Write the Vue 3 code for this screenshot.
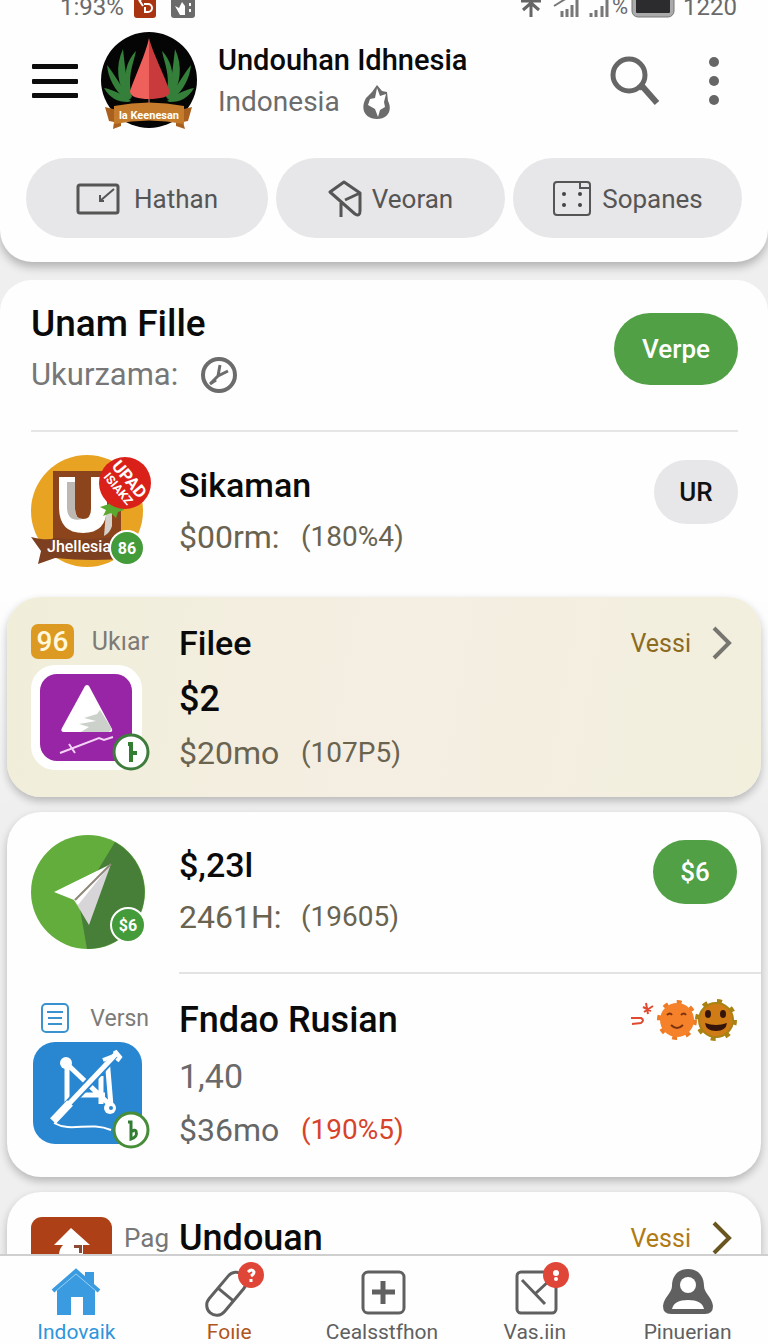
<template>
  <div class="screen">
    <header class="top">
      <div class="status">
        <span>1:93%</span>
        <svg class="status-app" width="22" height="24" viewBox="0 0 22 24">
          <rect width="22" height="24" rx="3" fill="#a83412" />
          <path d="M5 6l4 6M9 4l-4 3M10 10h4a4 4 0 0 1 0 8h-3v-5" fill="none" stroke="#fff" stroke-width="2" />
        </svg>
        <svg class="status-file" width="24" height="24" viewBox="0 0 24 24">
          <rect width="24" height="24" rx="3" fill="#6b6b6b" />
          <path d="M4 12l4 2 3-6 3 4v9H9z" fill="#fff" />
          <path d="M19 3v18" stroke="#fff" stroke-width="2" stroke-dasharray="3 3" />
        </svg>
        <span class="status-space"></span>
        <svg width="24" height="24" viewBox="0 0 24 24" fill="none" stroke="#666" stroke-width="3">
          <path d="M12 3v20M2 7h20M12 9l-8 7M12 9l8 7" />
        </svg>
        <svg class="signal" width="26" height="24" viewBox="0 0 26 24" fill="none" stroke="#777">
          <path d="M1 12L14 4" stroke-width="2" />
          <path d="M9 23v-6M14 23v-8M19 23V11M24 23V4" stroke-width="3" />
        </svg>
        <svg class="signal" width="20" height="24" viewBox="0 0 20 24" fill="none" stroke="#777" stroke-width="3">
          <path d="M2 23v-4M7 23v-7M13 23V12M18 23V4" />
        </svg>
        <span class="status-percent">%</span>
        <svg width="44" height="24" viewBox="0 0 44 24">
          <rect x="1" y="-10" width="42" height="33" rx="6" fill="#aaa" stroke="#777" />
          <rect x="5" y="-8" width="34" height="27" rx="1" fill="#2c2c2e" />
        </svg>
        <span class="status-time">1220</span>
      </div>

      <div class="appbar">
        <button class="icon-button" aria-label="Menu">
          <svg width="48" height="36" viewBox="0 0 48 36" fill="#0c0c0c">
            <rect x="1" y="1" width="46" height="5" rx="1" />
            <rect x="1" y="16" width="46" height="5" rx="1" />
            <rect x="1" y="30" width="46" height="5" rx="1" />
          </svg>
        </button>
        <svg class="logo" width="96" height="100" viewBox="0 0 96 100">
          <circle cx="48" cy="49" r="48" fill="#050505" />
          <g fill="#347f3a">
            <path d="M27 69C16 54 14 35 22 18c2 17 3 31 8 48z" />
            <path d="M28 68C20 46 26 29 35 20c-3 15-9 25-4 46z" />
            <path d="M25 69C13 59 7 46 6 34c8 10 14 22 24 34z" />
            <path d="M27 71C16 71 9 67 3 57c10 2 18 6 27 13z" />
            <path d="M69 69c11-15 13-34 5-51-2 17-3 31-8 48z" />
            <path d="M68 68c8-22 2-39-7-48 3 15 9 25 4 46z" />
            <path d="M71 69c12-10 18-23 19-35-8 10-14 22-24 34z" />
            <path d="M69 71c11 0 18-4 24-14-10 2-18 6-27 13z" />
          </g>
          <path d="M48 7C45 22 35 43 29 60c0 6 8 8 19 8z" fill="#ee605c" />
          <path d="M48 7c4 16 15 36 21 54-1 5-10 7-21 7z" fill="#c93a3d" />
          <path d="M48 68v7" stroke="#704030" stroke-width="2" />
          <path d="M4 76l16 4v15l-8 3 1-7-5-1zM91 76l-16 4v15l9 3-2-7 5-1z" fill="#a9601e" />
          <path d="M13 75q35-7 70 0v18q-35-7-70 0z" fill="#c47b2b" />
          <text x="48" y="88" text-anchor="middle" font-size="11" font-weight="700" fill="#fff">la Keenesan</text>
        </svg>
        <div class="heading">
          <h1>Undouhan Idhnesia</h1>
          <p>
            Indonesia
            <svg width="30" height="36" viewBox="0 0 30 36">
              <path d="M4 14L10 8l5-7 5 6 5 1 1 9c5 10-1 18-11 18S-3 27 4 14z" fill="#6c6c6c" />
              <path d="M15 4l3 8 6-2-2 8 1 5-5 3-2 7-3-8-7-4 2-6 5-1z" fill="#fff" />
            </svg>
          </p>
        </div>
        <button class="icon-button search" aria-label="Search">
          <svg width="50" height="52" viewBox="0 0 50 52" fill="none" stroke="#666">
            <circle cx="19" cy="20" r="16" stroke-width="5" />
            <path d="M29 33l3-2 15 17" stroke-width="6" />
          </svg>
        </button>
        <button class="icon-button" aria-label="More">
          <svg width="48" height="50" viewBox="0 0 48 50" fill="#666">
            <circle cx="24" cy="6" r="5" />
            <circle cx="24" cy="25" r="5" />
            <circle cx="24" cy="44" r="5" />
          </svg>
        </button>
      </div>

      <div class="chips">
        <button class="chip chip-wide">
          <svg width="44" height="32" viewBox="0 0 44 32" fill="none" stroke="#555" stroke-width="3">
            <rect x="2" y="2" width="40" height="28" rx="2" />
            <path d="M38 6L24 18M24 12v6h4" stroke-width="2" />
          </svg>
          Hathan
        </button>
        <button class="chip chip-tight">
          <svg width="34" height="38" viewBox="0 0 34 38" fill="none" stroke="#555" stroke-width="3" stroke-linejoin="round">
            <path d="M2 12L16 2l16 11v18q0 6-5 3L2 12zM32 13L17 20M13 23v14" />
          </svg>
          Veoran
        </button>
        <button class="chip">
          <svg width="40" height="36" viewBox="0 0 40 36" fill="none" stroke="#555" stroke-width="2">
            <rect x="2" y="1" width="36" height="33" rx="3" />
            <path d="M28 1v6h10" />
            <g fill="#444" stroke="none">
              <circle cx="12" cy="13" r="2" />
              <circle cx="28" cy="13" r="2" />
              <circle cx="12" cy="24" r="2" />
              <circle cx="28" cy="24" r="2" />
            </g>
          </svg>
          Sopanes
        </button>
      </div>
    </header>

    <main class="feed">
      <section class="intro">
        <div class="intro-head">
          <div>
            <h2>Unam Fille</h2>
            <p>
              Ukurzama:
              <svg width="38" height="38" viewBox="0 0 38 38" fill="none" stroke="#6c6c6c">
                <circle cx="19" cy="19" r="16" stroke-width="4" />
                <path d="M20 9l-2 11M28 15L18 20l-8 8M10 28l6-4" stroke-width="3" />
              </svg>
            </p>
          </div>
          <button class="action">Verpe</button>
        </div>

        <article class="row row-short">
          <div class="lead">
            <svg width="120" height="112" viewBox="0 0 120 112">
              <circle cx="56" cy="56" r="56" fill="#e9a322" />
              <path d="M22 16h68v70H22z" fill="#8b441c" />
              <path d="M28 22h16v32q0 10 8 10t8-10V22h16v30q0 26-24 26-24 0-24-26z" fill="#fff" />
              <path d="M36 27h8v27q0 10 8 10-16 4-16-12z" fill="#bdb8b1" />
              <path d="M81 54v17q-2 7-8 10l2-24z" fill="#d5d1ca" />
              <path d="M76 43l2 6-9 3 6 3-3 6 8-3 5 5 2-6 6-2-4-8z" fill="#5aa82f" />
              <path d="M0 82q16 4 24 1 38 4 76-4v24q-38 4-76 0l-17 6 3-13z" fill="#7c3f20" />
              <circle cx="94" cy="28" r="26" fill="#da2119" />
              <g transform="rotate(50 94 28)" fill="#fff" font-weight="700" text-anchor="middle">
                <text x="94" y="28" font-size="17">UPAD</text>
                <text x="94" y="41" font-size="12">ISIAKZ</text>
              </g>
              <text x="48" y="97" text-anchor="middle" font-size="16" font-weight="500" fill="#fff">Jhellesia</text>
              <circle cx="96" cy="93" r="17" fill="#439b3a" stroke="#fff" stroke-width="2" />
              <text x="96" y="99" text-anchor="middle" font-size="16" font-weight="700" fill="#fff">86</text>
            </svg>
          </div>
          <div class="info">
            <h3>Sikaman</h3>
            <p class="price olive"><span>$00rm:</span><small>(180%4)</small></p>
          </div>
          <button class="pill pill-grey">UR</button>
        </article>
      </section>

      <div class="stage">
        <article class="card card-gold row">
          <div class="lead">
            <div class="meta">
              <span class="score">96</span>
              Ukıar
            </div>
            <svg width="120" height="108" viewBox="0 0 120 108">
              <rect width="111" height="105" rx="24" fill="#fff" />
              <rect x="9" y="9" width="92" height="87" rx="17" fill="#9825a5" />
              <path d="M54 21q2-2 4 0l23 43q1 3-2 3H33q-4 0-2-4z" fill="#fff" />
              <path d="M53 53l13-4 3-4 12 19-3 3H50l8-5-10-3 17-3z" fill="#ccd2cb" />
              <path d="M29 88l39-15 5 2 9-3M38 79l6 9" fill="none" stroke="#f3d3f5" stroke-width="2" />
              <circle cx="100" cy="87" r="17" fill="#fff" stroke="#3d7c3b" stroke-width="3" />
              <path d="M97 79h3v18M100 88h6" fill="none" stroke="#327d32" stroke-width="4" />
            </svg>
          </div>
          <div class="info">
            <h3>Filee</h3>
            <p class="amount strong">$2</p>
            <p class="price olive"><span>$20mo</span><small>(107P5)</small></p>
          </div>
          <a class="more" href="#">
            Vessi
            <svg width="22" height="34" viewBox="0 0 22 34" fill="none" stroke="#77756f" stroke-width="4">
              <path d="M3 2l15 15L3 32" />
            </svg>
          </a>
        </article>
      </div>

      <section class="card group">
        <article class="row row-short">
          <div class="lead">
            <svg width="120" height="114" viewBox="0 0 120 114">
              <circle cx="57" cy="57" r="57" fill="#62ad3b" />
              <path d="M84 7a57 57 0 0 1-28 107l-8-46 22-38z" fill="#477f39" />
              <path d="M80 29L23 57l20 8z" fill="#fff" />
              <path d="M80 29L43 65l15 25z" fill="#d7d5d7" />
              <path d="M80 29L43 65l4 5z" fill="#fff" />
              <path d="M80 29L44 65" stroke="#8f887a" stroke-width="2" />
              <circle cx="97" cy="90" r="17" fill="#439b3a" stroke="#fff" stroke-width="2" />
              <text x="97" y="96" text-anchor="middle" font-size="16" font-weight="700" fill="#fff">$6</text>
            </svg>
          </div>
          <div class="info">
            <h3>$,23l</h3>
            <p class="price olive"><span>2461H:</span><small>(19605)</small></p>
          </div>
          <button class="pill pill-green">$6</button>
        </article>

        <hr />

        <article class="row">
          <div class="lead">
            <div class="meta meta-small">
              <svg class="doc" width="28" height="30" viewBox="0 0 28 30" fill="none" stroke="#3a93cf" stroke-width="2">
                <rect x="1" y="1" width="26" height="28" rx="4" />
                <path d="M6 9h16M7 15h14M7 21h14" />
              </svg>
              Versn
            </div>
            <svg width="120" height="108" viewBox="0 0 120 108">
              <rect x="2" width="109" height="102" rx="22" fill="#2987d1" />
              <g fill="none" stroke="#fff">
                <path d="M36 22v42M36 22l43 41M76 16l4 48M44 53h30M70 34v28" stroke-width="5" />
                <path d="M84 13L32 68" stroke="#2987d1" stroke-width="9" />
                <path d="M85 12L33 67" stroke-width="5" />
                <path d="M39 61L22 79" stroke-width="8" />
                <path d="M72 18l13-5-1-4 5 6-3 4" stroke-width="4" />
                <path d="M23 81c18 10 35-2 57 7" stroke-width="2" />
              </g>
              <circle cx="35" cy="21" r="6" fill="#fff" />
              <circle cx="79" cy="66" r="6" fill="#fff" />
              <circle cx="80" cy="66" r="2" fill="#2987d1" />
              <circle cx="100" cy="88" r="17" fill="#fff" stroke="#468c39" stroke-width="3" />
              <path d="M97 80h3v17q7-2 5-8-2-2-4 1" fill="none" stroke="#327d32" stroke-width="3" />
            </svg>
          </div>
          <div class="info">
            <h3 class="wide">Fndao Rusian</h3>
            <p class="amount">1,40</p>
            <p class="price"><span>$36mo</span><small class="red">(190%5)</small></p>
          </div>
          <svg class="faces" width="108" height="52" viewBox="0 0 108 52">
            <path d="M2 24h10q4 2 0 5l-9 1M14 13l8 4M17 9l2 11M24 12l-9 6" fill="none" stroke="#e04a30" stroke-width="2" />
            <circle cx="48" cy="26" r="18" fill="none" stroke="#ed7a24" stroke-width="4" stroke-dasharray="5 9" />
            <circle cx="48" cy="26" r="17" fill="#f5822a" />
            <path d="M38 21q3-3 5 0M52 21q3-3 5 0M42 31q6 6 12 0" fill="none" stroke="#7b3210" stroke-width="2" />
            <circle cx="87" cy="26" r="19" fill="none" stroke="#a98213" stroke-width="4" stroke-dasharray="5 10" />
            <circle cx="87" cy="26" r="17" fill="#cf7c16" stroke="#a98213" stroke-width="2" />
            <path d="M76 29q11 4 22 0-1 8-11 8t-11-8z" fill="#35150b" />
            <ellipse cx="79" cy="20" rx="3" ry="4" fill="#35150b" />
            <ellipse cx="94" cy="20" rx="3" ry="4" fill="#35150b" />
          </svg>
        </article>
      </section>

      <section class="card">
        <article class="row">
          <div class="lead lead-inline">
            <svg width="81" height="80" viewBox="0 0 81 80">
              <rect width="81" height="80" rx="11" fill="#ae4018" />
              <path d="M40 11L23 28h9q-4 4-4 10h24V28h7z" fill="#fff" />
              <path d="M43 28h8v8h-3v-5h-5z" fill="#8c4a35" />
            </svg>
            Pag
          </div>
          <div class="info">
            <h3 class="wide">Undouan</h3>
          </div>
          <a class="more amber" href="#">
            Vessi
            <svg width="22" height="34" viewBox="0 0 22 34" fill="none" stroke="#69551f" stroke-width="4">
              <path d="M3 2l15 15L3 32" />
            </svg>
          </a>
        </article>
      </section>
    </main>

    <nav class="tabs">
      <a class="tab tab-active" href="#">
        <svg width="50" height="48" viewBox="0 0 50 48">
          <path d="M6 21L25 5l19 16v26H32V29H20v18H6z" fill="#3a9be0" />
          <path d="M34 4h9v15l-9-7z" fill="#3a9be0" />
          <path d="M2 23L25 3l23 20" fill="none" stroke="#3a9be0" stroke-width="4" />
          <path d="M5 23L25 6l20 17" fill="none" stroke="#9bd0f5" stroke-width="1" />
        </svg>
        Indovaik
      </a>
      <a class="tab tab-brown" href="#">
        <svg width="60" height="48" viewBox="0 0 60 48">
          <g transform="rotate(40 28 25)" fill="none" stroke="#606060" stroke-width="3">
            <rect x="18" y="1" width="20" height="50" rx="10" />
            <path d="M18 27h20" />
          </g>
          <circle cx="52" cy="7" r="13" fill="#e04638" />
          <path d="M49 4q4-4 6 0 0 2-3 4M52 11v3" fill="none" stroke="#fff" stroke-width="3" />
        </svg>
        Foıie
      </a>
      <a class="tab" href="#">
        <svg width="50" height="48" viewBox="0 0 50 48" fill="none" stroke="#606060">
          <rect x="6" y="4" width="41" height="41" rx="5" stroke-width="3" />
          <path d="M26 13v23M15 24h23" stroke-width="5" />
        </svg>
        Cealsstfhon
      </a>
      <a class="tab" href="#">
        <svg width="60" height="48" viewBox="0 0 60 48" fill="none" stroke="#606060">
          <rect x="12" y="4" width="39" height="41" rx="4" stroke-width="3" />
          <path d="M17 12l23 24M31 25l14-13" stroke-width="3" />
          <circle cx="51" cy="7" r="13" fill="#e04638" stroke="none" />
          <circle cx="51" cy="5" r="3" fill="#fff" stroke="none" />
          <circle cx="51" cy="11" r="2" fill="#fff" stroke="none" />
        </svg>
        Vas.iin
      </a>
      <a class="tab" href="#">
        <svg width="52" height="48" viewBox="0 0 52 48">
          <path d="M26 1c10 0 16 7 16 17 0 7 8 11 9 20q0 8-8 8H9q-8 0-8-8c1-9 9-13 9-20C10 8 16 1 26 1z" fill="#606060" />
          <circle cx="26" cy="17" r="8" fill="#fff" />
          <path d="M10 41q2-9 16-9t16 9z" fill="#fff" />
        </svg>
        Pinuerian
      </a>
    </nav>
  </div>
</template>

<script setup>
</script>

<style>
body {
  margin: 0;
  background: #efefef;
}
</style>

<style scoped>
.screen {
  height: 100vh;
  display: flex;
  flex-direction: column;
  font-family: Roboto, "Liberation Sans", sans-serif;
  background: #efefef;
  color: #0a0a0a;
}

h1, h2, h3, p {
  margin: 0;
}

svg {
  display: block;
  flex-shrink: 0;
}

button {
  border: none;
  font-family: inherit;
  cursor: pointer;
}

a {
  text-decoration: none;
}

.top {
  position: relative;
  z-index: 1;
  background: #fefefe;
  border-radius: 0 0 32px 32px;
  padding-bottom: 24px;
  box-shadow: 0 5px 10px rgba(0, 0, 0, 0.26);
}

.status {
  height: 18px;
  display: flex;
  align-items: flex-end;
  overflow: hidden;
  padding: 0 31px 0 60px;
  font-size: 24px;
  line-height: 22px;
  color: #6a6a6a;
}

.status-app {
  margin-left: 10px;
}

.status-file {
  margin-left: 15px;
}

.status-space {
  flex: 1;
}

.signal {
  margin-left: 10px;
}

.status-percent {
  margin: 0 3px;
  font-size: 22px;
}

.status-time {
  margin-left: 8px;
}

.appbar {
  height: 126px;
  display: flex;
  align-items: center;
  padding: 0 30px 0 31px;
}

.icon-button {
  padding: 0;
  background: none;
}

.search {
  margin-right: 30px;
}

.logo {
  margin-left: 22px;
}

.heading {
  flex: 1;
  margin-left: 21px;
}

.heading h1 {
  font-size: 29px;
  line-height: 42px;
  font-weight: 500;
  white-space: nowrap;
}

.heading p {
  display: flex;
  align-items: center;
  gap: 22px;
  font-size: 28px;
  line-height: 42px;
  color: #6c6c6c;
}

.chips {
  display: flex;
  gap: 8px;
  padding: 14px 26px 0;
}

.chip {
  flex: 229;
  height: 80px;
  display: flex;
  align-items: center;
  justify-content: center;
  gap: 10px;
  padding: 2px 0 0;
  border-radius: 40px;
  background: #e7e6e8;
  font-size: 26px;
  color: #555;
}

.chip-wide {
  flex: 242;
  gap: 14px;
}

.feed {
  flex: 1;
  min-height: 0;
  overflow-y: auto;
  scrollbar-width: none;
}

.intro {
  margin-top: 18px;
  border-radius: 32px 32px 0 0;
  background: #fefefe;
}

.intro-head {
  display: flex;
  align-items: center;
  justify-content: space-between;
  margin: 0 30px 0 31px;
  padding: 22px 0 34px;
  border-bottom: 2px solid #e6e6e6;
}

.intro-head h2 {
  font-size: 37px;
  line-height: 44px;
  font-weight: 500;
}

.intro-head p {
  display: flex;
  align-items: center;
  gap: 22px;
  padding-top: 8px;
  font-size: 31px;
  line-height: 42px;
  color: #777;
}

.action {
  width: 124px;
  height: 72px;
  border-radius: 36px;
  background: #51a045;
  font-size: 26px;
  font-weight: 500;
  color: #fff;
}

.row {
  display: flex;
  align-items: flex-start;
  padding: 20px 24px;
}

.row-short {
  padding: 23px 24px;
}

.intro .row-short {
  padding: 23px 30px 30px 31px;
}

.lead {
  flex: none;
  width: 148px;
}

.lead-inline {
  display: flex;
  align-items: flex-start;
  gap: 12px;
  padding-top: 5px;
  font-size: 26px;
  line-height: 42px;
  color: #777;
}

.meta {
  height: 48px;
  width: 118px;
  display: flex;
  align-items: center;
  justify-content: space-between;
  font-size: 25px;
  color: #7d7b76;
}

.meta-small {
  font-size: 23px;
}

.doc {
  margin-left: 10px;
}

.score {
  width: 43px;
  border-radius: 7px;
  background: #dd9a22;
  font-size: 28px;
  line-height: 35px;
  font-weight: 500;
  text-align: center;
  color: #fff8dc;
}

.info {
  flex: 1;
  min-width: 0;
}

.row-short .info {
  padding: 4px 0;
}

.info h3 {
  font-size: 34px;
  line-height: 52px;
  font-weight: 500;
}

.info .wide {
  font-size: 36px;
}

.amount {
  font-size: 34px;
  line-height: 60px;
  color: #6a6a6a;
}

.amount.strong {
  font-size: 36px;
  font-weight: 500;
  color: #0a0a0a;
}

.price {
  display: flex;
  font-size: 32px;
  line-height: 48px;
  color: #666;
}

.row-short .price {
  line-height: 52px;
}

.price span {
  width: 122px;
}

.price small {
  font-size: 28px;
}

.olive {
  color: #69634f;
}

.red {
  color: #d8432b;
}

.pill {
  width: 84px;
  height: 64px;
  margin-top: 5px;
  padding: 0;
  border-radius: 32px;
  font-size: 26px;
  font-weight: 500;
}

.pill-grey {
  background: #e7e6e8;
  color: #111;
}

.pill-green {
  background: #51a045;
  color: #fff;
}

.stage {
  padding: 0 0 15px;
  background: linear-gradient(#fefefe, #efefef);
}

.card {
  margin: 0 7px 15px;
  border-radius: 34px;
  background: #fefefe;
  box-shadow: 0 4px 9px rgba(0, 0, 0, 0.24);
}

.card-gold {
  margin-bottom: 0;
  background: linear-gradient(100deg, #f0eed9, #f5eee3 50%, #f2efdd);
}

.group {
  padding-bottom: 3px;
}

hr {
  height: 2px;
  margin: 0 0 0 172px;
  border: none;
  background: #e3e3e3;
}

.more {
  display: flex;
  align-items: center;
  gap: 20px;
  height: 52px;
  padding-right: 4px;
  font-size: 25px;
  color: #8d6b1e;
}

.amber {
  color: #b07a14;
}

.tabs {
  display: grid;
  grid-template-columns: repeat(5, 1fr);
  padding: 12px 4px 0 0;
  border-top: 2px solid #cfcfcf;
  background: #fefefe;
}

.tab {
  display: flex;
  flex-direction: column;
  align-items: center;
  gap: 4px;
  font-size: 21px;
  line-height: 24px;
  color: #606060;
}

.tab svg {
  overflow: visible;
}

.tab-active {
  color: #2f95dc;
}

.tab-brown {
  color: #b0561c;
}
</style>
